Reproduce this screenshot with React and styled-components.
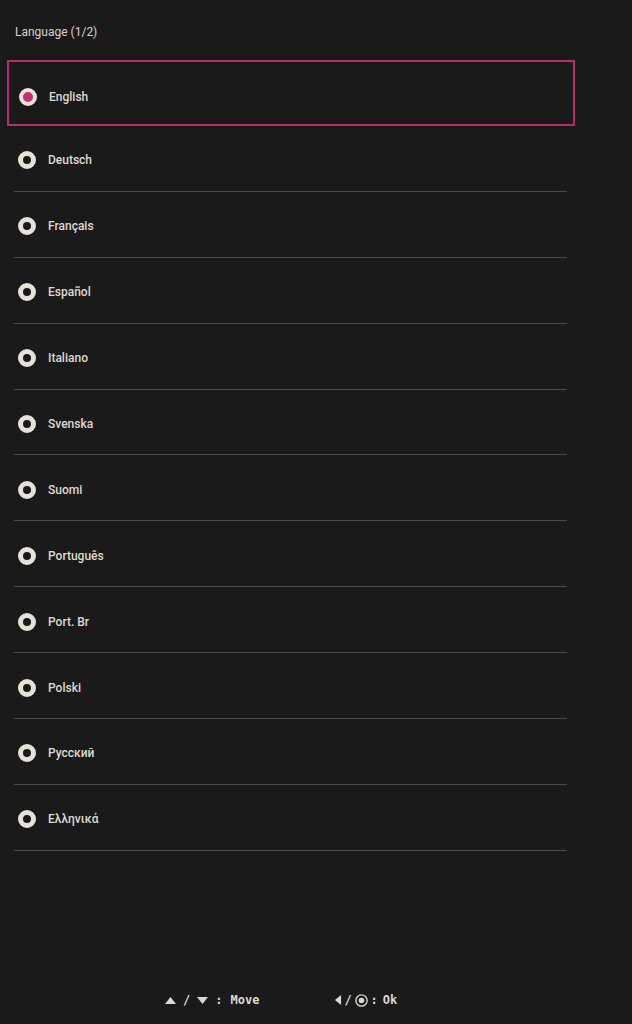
import React, { useState } from "react";
import styled, { createGlobalStyle } from "styled-components";

const languages = [
  "English",
  "Deutsch",
  "Français",
  "Español",
  "Italiano",
  "Svenska",
  "Suomi",
  "Português",
  "Port. Br",
  "Polski",
  "Русский",
  "Ελληνικά",
];

const App = () => {
  const [selected] = useState(0);
  const [focused] = useState(0);

  return (
    <PageStyled>
      <GlobalStyle />
      <TitleStyled>Language (1/2)</TitleStyled>
      <ListStyled>
        {languages.map((name, key) => (
          <RowStyled key={key} focused={key === focused}>
            <RadioStyled checked={key === selected} />
            <LabelStyled>{name}</LabelStyled>
          </RowStyled>
        ))}
      </ListStyled>
      <FooterStyled>
        <HintStyled>
          <svg width="11" height="7" viewBox="0 0 11 7">
            <path d="M5.5 0 L11 7 L0 7 Z" fill="#dcd8d0" />
          </svg>
          <span>/</span>
          <svg width="11" height="7" viewBox="0 0 11 7">
            <path d="M0 0 L11 0 L5.5 7 Z" fill="#dcd8d0" />
          </svg>
          <span>:</span>
          <span>Move</span>
        </HintStyled>
        <HintStyled tight>
          <svg width="6" height="10" viewBox="0 0 6 10">
            <path d="M6 0 L6 10 L0 5 Z" fill="#dcd8d0" />
          </svg>
          <span>/</span>
          <svg width="13" height="13" viewBox="0 0 13 13">
            <circle cx="6.5" cy="6.5" r="5.6" fill="none" stroke="#dcd8d0" strokeWidth="1.4" />
            <circle cx="6.5" cy="6.5" r="2.8" fill="#dcd8d0" />
          </svg>
          <span>:</span>
          <span>Ok</span>
        </HintStyled>
      </FooterStyled>
    </PageStyled>
  );
};

export default App;

// styled
const GlobalStyle = createGlobalStyle`
  html, body {
    margin: 0;
    padding: 0;
    background: #1b1a1a;
  }
  body {
    font-family: Roboto, "Liberation Sans", sans-serif;
    color: #dcd8d0;
  }
`;

const PageStyled = styled.div`
  width: 632px;
  height: 1024px;
  display: flex;
  flex-direction: column;
  background: #1b1a1a;
  box-sizing: border-box;
  overflow: hidden;
`;

const TitleStyled = styled.div`
  height: 60px;
  box-sizing: border-box;
  padding: 25px 0 0 15px;
  font-size: 12px;
  line-height: 15px;
  color: #d6d2ca;
`;

const ListStyled = styled.div`
  display: flex;
  flex-direction: column;
`;

const RowStyled = styled.div`
  display: flex;
  align-items: center;
  box-sizing: border-box;
  height: 65.9px;
  ${props =>
    props.focused
      ? `
    margin-left: 7px;
    width: 568px;
    height: 66px;
    border: 2px solid #b62d6b;
    padding: 8px 0 0 10px;
  `
      : `
    margin-left: 14px;
    width: 553px;
    border-bottom: 1px solid #4a4947;
    padding: 4px 0 0 4px;
  `}
`;

const RadioStyled = styled.span`
  width: 18px;
  height: 18px;
  box-sizing: border-box;
  border-radius: 50%;
  border: ${props => (props.checked ? "4px" : "5px")} solid #e6e2d9;
  background: ${props => (props.checked ? "#c42f6f" : "#1b1a1a")};
  flex-shrink: 0;
`;

const LabelStyled = styled.span`
  margin-left: 12px;
  font-size: 12px;
  font-weight: 500;
  color: #dedad2;
`;

const FooterStyled = styled.div`
  margin-top: auto;
  display: flex;
  align-items: center;
  gap: 76px;
  padding: 0 0 16px 165px;
  height: 16px;
  font-family: "DejaVu Sans Mono", "Liberation Mono", monospace;
  font-size: 12px;
  font-weight: bold;
  color: #dcd8d0;
`;

const HintStyled = styled.div`
  display: flex;
  align-items: center;
  gap: ${props => (props.tight ? "3px" : "7px")};
  span:last-child {
    margin-left: ${props => (props.tight ? "2px" : "1px")};
  }
`;
